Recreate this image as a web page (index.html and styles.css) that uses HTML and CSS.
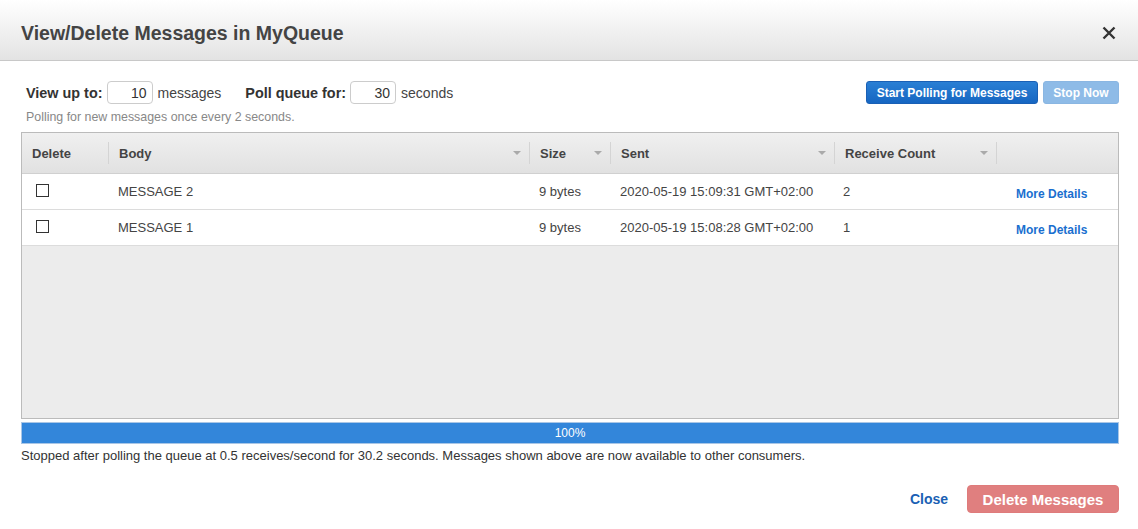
FILE: index.html
```html
<!DOCTYPE html>
<html>
<head>
<meta charset="utf-8">
<link rel="stylesheet" href="styles.css">
</head>
<body>
<div class="modal">
  <div class="modal-header">
    <h1 class="title">View/Delete Messages in MyQueue</h1>
    <span class="close-x">
      <svg width="14" height="14" viewBox="0 0 14 14"><path d="M1.5 1.5 L12.5 12.5 M12.5 1.5 L1.5 12.5" stroke="#333" stroke-width="2.4" fill="none"/></svg>
    </span>
  </div>
  <div class="modal-body">
    <div class="controls">
      <div class="fields">
        <label class="lbl">View up to:</label>
        <input class="num" value="10">
        <span class="unit">messages</span>
        <label class="lbl lbl2">Poll queue for:</label>
        <input class="num" value="30">
        <span class="unit">seconds</span>
      </div>
      <div class="actions">
        <button class="btn btn-primary">Start Polling for Messages</button>
        <button class="btn btn-disabled">Stop Now</button>
      </div>
    </div>
    <div class="hint">Polling for new messages once every 2 seconds.</div>
    <div class="grid-box">
      <table class="grid">
        <colgroup>
          <col class="c1"><col class="c2"><col class="c3"><col class="c4"><col class="c5"><col class="c6">
        </colgroup>
        <thead>
          <tr>
            <th class="first">Delete</th>
            <th><span class="th-in">Body<i class="arrow"></i></span></th>
            <th><span class="th-in">Size<i class="arrow"></i></span></th>
            <th><span class="th-in">Sent<i class="arrow"></i></span></th>
            <th><span class="th-in">Receive Count<i class="arrow"></i></span></th>
            <th><span class="th-in"></span></th>
          </tr>
        </thead>
        <tbody>
          <tr>
            <td class="cb-cell"><span class="cb"></span></td>
            <td class="body-cell">MESSAGE 2</td>
            <td class="size-cell">9 bytes</td>
            <td class="sent-cell">2020-05-19 15:09:31 GMT+02:00</td>
            <td class="count-cell">2</td>
            <td class="link-cell"><a class="more">More Details</a></td>
          </tr>
          <tr>
            <td class="cb-cell"><span class="cb"></span></td>
            <td class="body-cell">MESSAGE 1</td>
            <td class="size-cell">9 bytes</td>
            <td class="sent-cell">2020-05-19 15:08:28 GMT+02:00</td>
            <td class="count-cell">1</td>
            <td class="link-cell"><a class="more">More Details</a></td>
          </tr>
        </tbody>
      </table>
    </div>
    <div class="progress"><span class="progress-label">100%</span></div>
    <div class="status">Stopped after polling the queue at 0.5 receives/second for 30.2 seconds. Messages shown above are now available to other consumers.</div>
  </div>
  <div class="modal-footer">
    <a class="close-link">Close</a>
    <button class="btn btn-danger">Delete Messages</button>
  </div>
</div>
</body>
</html>
```

FILE: styles.css
```css
* { box-sizing: border-box; }
html, body {
  margin: 0;
  padding: 0;
  background: #fff;
  font-family: "Liberation Sans", Arial, sans-serif;
  color: #444;
}
.modal {
  width: 1138px;
  height: 529px;
  display: flex;
  flex-direction: column;
}
.modal-header {
  height: 61px;
  flex: none;
  background: linear-gradient(#ffffff, #e3e3e3);
  border-bottom: 1px solid #c8c8c8;
  display: flex;
  align-items: center;
  justify-content: space-between;
  padding: 6px 22px 0 21px;
}
.title {
  margin: 0;
  font-size: 19.5px;
  font-weight: bold;
  color: #444;
}
.close-x {
  display: flex;
}
.modal-body {
  padding: 0 19px 0 21px;
}
.controls {
  display: flex;
  justify-content: space-between;
  align-items: center;
  margin-top: 20px;
  height: 23px;
}
.fields {
  display: flex;
  align-items: center;
  padding-left: 5px;
  font-size: 14px;
}
.lbl {
  font-weight: bold;
  font-size: 14.4px;
  color: #333;
}
.lbl2 { margin-left: 24px; }
.num {
  width: 46px;
  height: 23px;
  margin: 0 5px 0 4px;
  border: 1px solid #ccc;
  border-radius: 4px;
  text-align: right;
  padding: 0 5px 0 0;
  font-family: inherit;
  font-size: 14px;
  color: #333;
}
.unit { color: #444; }
.actions {
  display: flex;
  gap: 5px;
}
.btn {
  font-family: inherit;
  font-weight: bold;
  color: #fff;
  border-radius: 3px;
  cursor: pointer;
}
.btn-primary {
  height: 23px;
  width: 172px;
  font-size: 12px;
  background: linear-gradient(#2a7fd4, #1666c2);
  border: 1px solid #1a60b5;
}
.btn-disabled {
  height: 23px;
  width: 76px;
  font-size: 12px;
  background: #8ebbe7;
  border: 1px solid #8ab6e2;
}
.hint {
  font-size: 12.4px;
  color: #888;
  margin: 6px 0 0 5px;
  height: 22px;
}
.grid-box {
  height: 287px;
  border: 1px solid #bbb;
  background: #ececec;
}
.grid {
  width: 100%;
  border-collapse: collapse;
  table-layout: fixed;
}
.c1 { width: 86px; }
.c2 { width: 421px; }
.c3 { width: 81px; }
.c4 { width: 224px; }
.c5 { width: 162px; }
.c6 { width: auto; }
.grid th {
  height: 40px;
  padding: 1px 0 0 0;
  text-align: left;
  font-size: 13px;
  font-weight: bold;
  color: #444;
  background: linear-gradient(#f0f0f0, #e1e1e1);
  border-bottom: 1px solid #d0d0d0;
}
.grid th.first { padding-left: 10px; }
.th-in {
  display: flex;
  align-items: center;
  height: 22px;
  border-left: 1px solid #d4d4d4;
  padding-left: 10px;
  position: relative;
}
.arrow {
  position: absolute;
  right: 8px;
  top: 9px;
  width: 0;
  height: 0;
  border-left: 4px solid transparent;
  border-right: 4px solid transparent;
  border-top: 4px solid #aaa;
}
.grid td {
  height: 36px;
  background: #fff;
  border-bottom: 1px solid #dcdcdc;
  font-size: 13px;
  color: #444;
  padding: 0;
  white-space: nowrap;
}
.cb-cell { padding-left: 14px !important; }
.cb {
  display: block;
  width: 13px;
  height: 13px;
  border: 1px solid #333;
  margin-top: -1px;
}
.body-cell { padding-left: 10px !important; }
.size-cell { padding-left: 10px !important; }
.sent-cell { padding-left: 10px !important; }
.count-cell { padding-left: 9px !important; }
.link-cell { padding: 5px 0 0 20px !important; }
.more {
  font-size: 12px;
  font-weight: bold;
  color: #1a6fcf;
}
.progress {
  margin-top: 3px;
  height: 22px;
  background: #3386da;
  border: 1px solid #a9c6e6;
  display: flex;
  align-items: center;
  justify-content: center;
}
.progress-label {
  font-size: 12px;
  color: #fff;
}
.status {
  font-size: 13px;
  color: #333;
  margin-top: 4px;
}
.modal-footer {
  display: flex;
  justify-content: flex-end;
  align-items: center;
  gap: 19px;
  padding: 22px 19px 0 0;
}
.close-link {
  font-size: 14px;
  font-weight: bold;
  color: #1a5fb4;
}
.btn-danger {
  height: 28px;
  width: 152px;
  font-size: 15px;
  background: #e07f7f;
  border: 1px solid #df7b7b;
  border-radius: 4px;
}
```
